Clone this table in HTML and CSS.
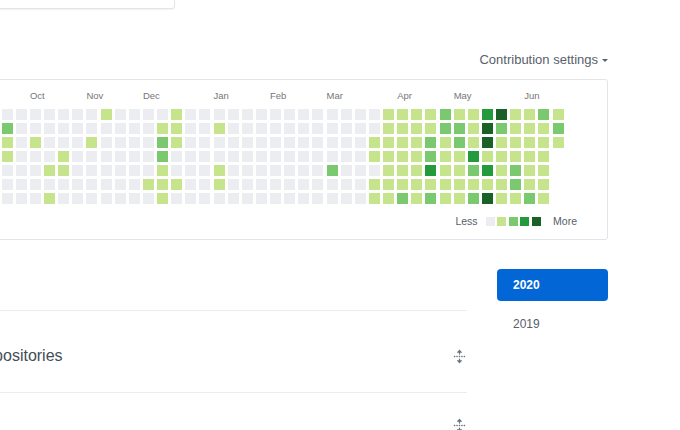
FILE: index.html
```html
<!DOCTYPE html>
<html lang="en">
<head>
<meta charset="utf-8">
<title>Contributions</title>
<link rel="stylesheet" href="styles.css">
</head>
<body>
<div class="page">
  <div class="pinned"></div>

  <div class="graph-head">
    <span class="settings">Contribution settings<span class="caret"></span></span>
  </div>

  <div class="calendar">
    <div class="months">
      <span class="month" style="grid-column:16">Oct</span>
      <span class="month" style="grid-column:20">Nov</span>
      <span class="month" style="grid-column:24">Dec</span>
      <span class="month" style="grid-column:29">Jan</span>
      <span class="month" style="grid-column:33">Feb</span>
      <span class="month" style="grid-column:37">Mar</span>
      <span class="month" style="grid-column:42">Apr</span>
      <span class="month" style="grid-column:46">May</span>
      <span class="month" style="grid-column:51">Jun</span>
    </div>
    <div class="days">
<i></i><i></i><i></i><i></i><i></i><i></i><i></i>
<i></i><i></i><i></i><i></i><i></i><i></i><i></i>
<i></i><i></i><i></i><i></i><i></i><i></i><i></i>
<i></i><i></i><i></i><i></i><i></i><i></i><i></i>
<i></i><i></i><i></i><i></i><i></i><i></i><i></i>
<i></i><i></i><i></i><i></i><i></i><i></i><i></i>
<i></i><i></i><i></i><i></i><i></i><i></i><i></i>
<i></i><i></i><i></i><i></i><i></i><i></i><i></i>
<i></i><i></i><i></i><i></i><i></i><i></i><i></i>
<i></i><i></i><i></i><i></i><i></i><i></i><i></i>
<i></i><i></i><i></i><i></i><i></i><i></i><i></i>
<i></i><i></i><i></i><i></i><i></i><i></i><i></i>
<i></i><i></i><i></i><i></i><i></i><i></i><i></i>
<i></i><i class="l2"></i><i class="l1"></i><i class="l1"></i><i></i><i></i><i></i>
<i></i><i></i><i></i><i></i><i></i><i></i><i></i>
<i></i><i></i><i class="l1"></i><i></i><i></i><i></i><i></i>
<i></i><i></i><i></i><i></i><i class="l1"></i><i></i><i class="l1"></i>
<i></i><i></i><i></i><i class="l1"></i><i class="l1"></i><i></i><i></i>
<i></i><i></i><i></i><i></i><i></i><i></i><i></i>
<i></i><i></i><i class="l1"></i><i></i><i></i><i></i><i></i>
<i class="l1"></i><i></i><i></i><i></i><i></i><i></i><i></i>
<i></i><i></i><i></i><i></i><i></i><i></i><i></i>
<i></i><i></i><i></i><i></i><i></i><i></i><i></i>
<i></i><i></i><i></i><i></i><i></i><i class="l1"></i><i></i>
<i></i><i class="l1"></i><i class="l2"></i><i class="l2"></i><i class="l1"></i><i class="l1"></i><i class="l1"></i>
<i class="l1"></i><i class="l1"></i><i class="l1"></i><i></i><i></i><i class="l1"></i><i></i>
<i></i><i></i><i></i><i></i><i></i><i></i><i></i>
<i></i><i></i><i></i><i></i><i></i><i></i><i></i>
<i></i><i class="l1"></i><i></i><i></i><i class="l1"></i><i class="l1"></i><i></i>
<i></i><i></i><i></i><i></i><i></i><i></i><i></i>
<i></i><i></i><i></i><i></i><i></i><i></i><i></i>
<i></i><i></i><i></i><i></i><i></i><i></i><i></i>
<i></i><i></i><i></i><i></i><i></i><i></i><i></i>
<i></i><i></i><i></i><i></i><i></i><i></i><i></i>
<i></i><i></i><i></i><i></i><i></i><i></i><i></i>
<i></i><i></i><i></i><i></i><i></i><i></i><i></i>
<i></i><i></i><i></i><i></i><i class="l2"></i><i></i><i></i>
<i></i><i></i><i></i><i></i><i></i><i></i><i></i>
<i></i><i></i><i></i><i></i><i></i><i></i><i></i>
<i></i><i></i><i class="l1"></i><i class="l1"></i><i></i><i class="l1"></i><i class="l1"></i>
<i class="l1"></i><i class="l1"></i><i class="l1"></i><i class="l1"></i><i class="l1"></i><i class="l1"></i><i class="l1"></i>
<i class="l1"></i><i class="l1"></i><i class="l1"></i><i class="l1"></i><i class="l1"></i><i class="l1"></i><i class="l2"></i>
<i class="l1"></i><i class="l1"></i><i class="l1"></i><i class="l1"></i><i class="l1"></i><i class="l1"></i><i class="l1"></i>
<i class="l1"></i><i class="l1"></i><i class="l2"></i><i class="l2"></i><i class="l3"></i><i class="l1"></i><i class="l2"></i>
<i class="l2"></i><i class="l2"></i><i class="l1"></i><i class="l1"></i><i class="l1"></i><i class="l1"></i><i class="l1"></i>
<i class="l1"></i><i class="l2"></i><i class="l2"></i><i class="l1"></i><i class="l1"></i><i class="l1"></i><i class="l1"></i>
<i class="l1"></i><i class="l1"></i><i class="l1"></i><i class="l3"></i><i class="l2"></i><i class="l1"></i><i class="l2"></i>
<i class="l3"></i><i class="l4"></i><i class="l4"></i><i class="l1"></i><i class="l3"></i><i class="l1"></i><i class="l4"></i>
<i class="l4"></i><i class="l2"></i><i class="l1"></i><i class="l1"></i><i class="l1"></i><i class="l1"></i><i class="l1"></i>
<i class="l1"></i><i class="l1"></i><i class="l1"></i><i class="l1"></i><i class="l2"></i><i class="l2"></i><i class="l1"></i>
<i class="l1"></i><i class="l1"></i><i class="l1"></i><i class="l1"></i><i class="l1"></i><i class="l1"></i><i class="l2"></i>
<i class="l2"></i><i class="l1"></i><i class="l1"></i><i class="l1"></i><i class="l1"></i><i class="l1"></i><i class="l1"></i>
<i class="l1"></i><i class="l2"></i><i class="l1"></i>
    </div>
    <div class="legend">
      <span class="legend-text less">Less</span>
      <i class="sq"></i><i class="sq l1"></i><i class="sq l2"></i><i class="sq l3"></i><i class="sq l4"></i>
      <span class="legend-text more">More</span>
    </div>
  </div>

  <div class="lower">
    <div class="activity">
      <div class="month-rule"></div>
      <div class="item first">
        <span class="item-title">Created 66 commits in 3 repositories</span>
        <svg class="unfold" width="13" height="15" viewBox="0 0 16 16" preserveAspectRatio="none" aria-hidden="true"><path fill="currentColor" d="M8.177.677l2.896 2.896a.25.25 0 01-.177.427H8.75v1.25a.75.75 0 01-1.5 0V4H5.104a.25.25 0 01-.177-.427L7.823.677a.25.25 0 01.354 0zM7.25 10.75a.75.75 0 011.5 0V12h2.146a.25.25 0 01.177.427l-2.896 2.896a.25.25 0 01-.354 0l-2.896-2.896A.25.25 0 015.104 12H7.25v-1.25zm-5-2a.75.75 0 000-1.5h-.5a.75.75 0 000 1.5h.5zM6 8a.75.75 0 01-.75.75h-.5a.75.75 0 010-1.5h.5A.75.75 0 016 8zm2.25.75a.75.75 0 000-1.5h-.5a.75.75 0 000 1.5h.5zM12 8a.75.75 0 01-.75.75h-.5a.75.75 0 010-1.5h.5A.75.75 0 0112 8zm2.25.75a.75.75 0 000-1.5h-.5a.75.75 0 000 1.5h.5z"/></svg>
      </div>
      <div class="item second">
        <svg class="unfold" width="13" height="15" viewBox="0 0 16 16" preserveAspectRatio="none" aria-hidden="true"><path fill="currentColor" d="M8.177.677l2.896 2.896a.25.25 0 01-.177.427H8.75v1.25a.75.75 0 01-1.5 0V4H5.104a.25.25 0 01-.177-.427L7.823.677a.25.25 0 01.354 0zM7.25 10.75a.75.75 0 011.5 0V12h2.146a.25.25 0 01.177.427l-2.896 2.896a.25.25 0 01-.354 0l-2.896-2.896A.25.25 0 015.104 12H7.25v-1.25zm-5-2a.75.75 0 000-1.5h-.5a.75.75 0 000 1.5h.5zM6 8a.75.75 0 01-.75.75h-.5a.75.75 0 010-1.5h.5A.75.75 0 016 8zm2.25.75a.75.75 0 000-1.5h-.5a.75.75 0 000 1.5h.5zM12 8a.75.75 0 01-.75.75h-.5a.75.75 0 010-1.5h.5A.75.75 0 0112 8zm2.25.75a.75.75 0 000-1.5h-.5a.75.75 0 000 1.5h.5z"/></svg>
      </div>
    </div>
    <nav class="years">
      <a class="year selected" href="#">2020</a>
      <a class="year" href="#">2019</a>
    </nav>
  </div>
</div>
</body>
</html>
```

FILE: styles.css
```css
* { box-sizing: border-box; }

html, body {
  margin: 0;
  overflow: hidden;
  background: #fff;
}

body {
  font-family: "Liberation Sans", Arial, sans-serif;
  color: #24292e;
}

.page {
  display: flex;
  flex-direction: column;
  width: 823px;
  margin-left: -215px;
}

.pinned {
  width: 390px;
  height: 40px;
  margin-top: -31px;
  border: 1px solid #e1e4e8;
  border-radius: 3px;
  box-shadow: 0 1px 1px rgba(27, 31, 35, 0.06);
}

.graph-head {
  display: flex;
  justify-content: flex-end;
  margin-top: 41px;
  height: 20px;
  line-height: 20px;
}

.settings {
  display: flex;
  align-items: center;
  font-size: 13px;
  color: #586069;
}

.caret {
  width: 0;
  height: 0;
  margin-left: 4px;
  margin-top: 1px;
  border-style: solid;
  border-width: 3px 3px 0;
  border-color: #586069 transparent transparent;
}

.calendar {
  margin-top: 9px;
  border: 1px solid #e1e4e8;
  border-radius: 3px;
  padding: 9px 30px 11px 32px;
}

.months {
  display: grid;
  grid-template-columns: repeat(53, 11px);
  column-gap: 3.13px;
  height: 14px;
  font-size: 9.5px;
  line-height: 14px;
  color: #767676;
}

.month {
  grid-row: 1;
  white-space: nowrap;
}

.days {
  display: grid;
  grid-template-rows: repeat(7, 11px);
  grid-auto-flow: column;
  grid-auto-columns: 11px;
  row-gap: 3.05px;
  column-gap: 3.13px;
  margin-top: 6px;
}

.days i,
.sq {
  display: block;
  background: #ebedf0;
}

.days .l1, .sq.l1 { background: #c6e48b; }
.days .l2, .sq.l2 { background: #7bc96f; }
.days .l3, .sq.l3 { background: #239a3b; }
.days .l4, .sq.l4 { background: #196127; }

.legend {
  display: flex;
  justify-content: flex-end;
  align-items: center;
  gap: 2.5px;
  height: 14px;
  margin-top: 10px;
  font-size: 10.5px;
  color: #586069;
}

.sq {
  width: 9px;
  height: 9px;
}

.less { margin-right: 5.5px; }
.more { margin-left: 10px; }

.lower {
  display: flex;
  gap: 30.3px;
}

.activity {
  width: 681.7px;
  flex: none;
}

.month-rule {
  height: 71px;
  border-bottom: 1px solid #eaecef;
}

.item {
  display: flex;
  justify-content: space-between;
  align-items: center;
  padding-left: 17px;
  padding-right: 0.6px;
  line-height: 20px;
}

.item.first {
  padding-top: 35px;
  padding-bottom: 26px;
  border-bottom: 1px solid #eaecef;
}

.item.second {
  justify-content: flex-end;
  height: 60px;
  padding-top: 22px;
  padding-bottom: 18px;
}

.item-title {
  font-size: 16px;
  color: #444d56;
  white-space: nowrap;
}

.unfold {
  display: block;
  color: #6a737d;
}

.years {
  display: flex;
  flex-direction: column;
  width: 111px;
  flex: none;
  margin-top: 28.7px;
}

.year {
  display: block;
  height: 32px;
  line-height: 32px;
  padding-left: 16px;
  font-size: 12px;
  color: #586069;
  text-decoration: none;
  border-radius: 4px;
}

.year + .year {
  margin-top: 7px;
}

.year.selected {
  background: #0366d6;
  color: #fff;
  font-weight: bold;
}
```
